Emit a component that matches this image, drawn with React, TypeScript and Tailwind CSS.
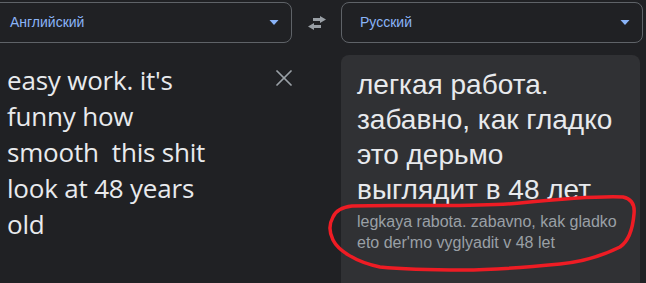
import { X } from "lucide-react"

function Caret() {
  return (
    <svg width="10" height="5" viewBox="0 0 10 5" className="shrink-0">
      <path d="M0.5 0 L9.5 0 L5 5 Z" fill="#8ab4f8" />
    </svg>
  )
}

function SwapIcon() {
  return (
    <svg width="20" height="16" viewBox="0 0 20 16" fill="#9aa0a6">
      <path d="M13 1 L19 4.5 L13 8 V6 H6 V3 H13 Z" />
      <path d="M7 8 L1 11.5 L7 15 V13 H14 V10 H7 Z" />
    </svg>
  )
}

export default function App() {
  return (
    <div className="relative w-[646px] h-[283px] overflow-hidden bg-[#202124] font-['Liberation_Sans',Arial,sans-serif]">
      {/* Language selectors */}
      <div className="flex items-center pt-[2px]">
        <div className="ml-[-10px] w-[302px] h-[41px] rounded-lg border border-[#5f6368] flex items-center justify-between pl-[19px] pr-[12px]">
          <span className="text-[#8ab4f8] text-[14px]">Английский</span>
          <Caret />
        </div>
        <div className="w-[49px] flex justify-center">
          <SwapIcon />
        </div>
        <div className="w-[302px] h-[41px] rounded-lg border border-[#5f6368] flex items-center justify-between pl-[18px] pr-[12px]">
          <span className="text-[#8ab4f8] text-[14px]">Русский</span>
          <Caret />
        </div>
      </div>

      {/* Text areas */}
      <div className="flex mt-[12px]">
        <div className="w-[341px] flex pl-[7px] pt-[7px]">
          <p className="w-[214px] shrink-0 text-[#e8eaed] text-[26px] leading-[36px] font-['Open_Sans',sans-serif] tracking-[-0.2px]">
            easy work. it's funny how smooth&nbsp; this shit look at 48 years old
          </p>
          <X className="ml-[49px] mt-[2px] w-[28px] h-[28px] text-[#9aa0a6]" strokeWidth={1.5} />
        </div>
        <div className="w-[299px] h-[260px] rounded-lg bg-[#303134] pl-[16px] pr-[18px] pt-[12px]">
          <p className="text-[#e8eaed] text-[28px] leading-[35px]">
            легкая работа. забавно, как гладко это дерьмо выглядит в 48 лет
          </p>
          <p className="text-[#9aa0a6] text-[16px] leading-[21px] mt-[4px]">
            legkaya rabota. zabavno, kak gladko eto der'mo vyglyadit v 48 let
          </p>
        </div>
      </div>

      {/* Red hand-drawn annotation */}
      <svg className="absolute left-0 top-0 pointer-events-none" width="646" height="283" viewBox="0 0 646 283">
        <path
          d="M333 217 C336 210 343 207 352 206 C400 204 470 208 520 203 C560 199 600 196 623 197 C632 199 635 205 634 214 C633 226 630 240 620 247 C600 257 580 262 560 264 C520 268 490 270 463 270 C430 270 400 269 380 267 C355 262 338 250 333 240 C329 232 329 224 333 217"
          fill="none"
          stroke="#ee1c24"
          strokeWidth="3.5"
          strokeLinecap="round"
        />
      </svg>
    </div>
  )
}
